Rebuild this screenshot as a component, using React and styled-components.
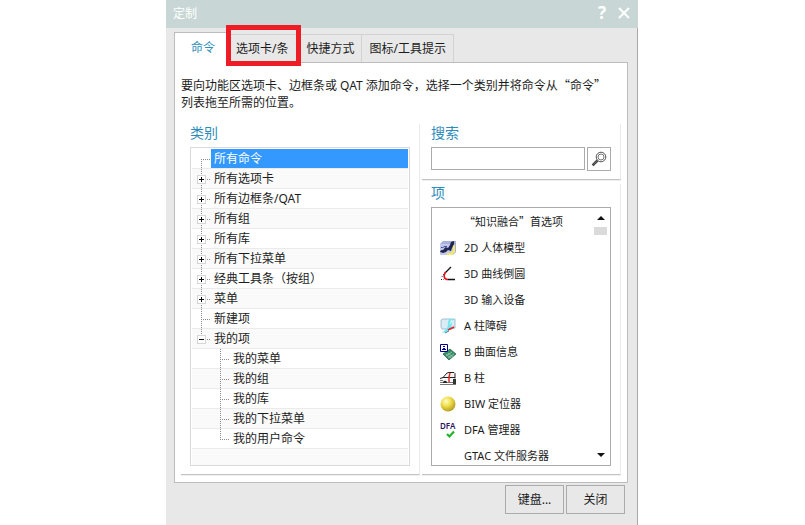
import { useState } from 'react'
import styled, { createGlobalStyle, css } from 'styled-components'

const GlobalStyle = createGlobalStyle`
  * {
    box-sizing: border-box;
  }

  body {
    margin: 0;
    padding-right: 1px;
    background: #ffffff;
    color: #1c1c1c;
    font-family: "Noto Sans", "Noto Sans CJK SC", sans-serif;
    font-size: 12px;
  }

  button, input {
    font: inherit;
    color: inherit;
  }
`

const Dialog = styled.div`
  display: flex;
  flex-direction: column;
  width: 100%;
  max-width: 472px;
  min-height: 100vh;
  margin: 0 auto;
  background: #e8e8e8;
`

// Title bar
const TitleBar = styled.header`
  display: flex;
  height: 28px;
  padding: 0 3px 0 7px;
  background: #c8d7d5;
  color: #ffffff;
`

const Title = styled.h1`
  flex: 1;
  margin: 0;
  font-size: 12px;
  font-weight: 400;
  line-height: 28px;
`

const TitleButton = styled.button`
  display: flex;
  align-items: center;
  justify-content: center;
  width: 22px;
  height: 26px;
  padding: 0;
  border: 0;
  background: none;
  color: #ffffff;
  font-size: 17px;
  font-weight: 700;
  line-height: 26px;
`

const Body = styled.div`
  flex: 1;
  padding: 4px 9px 11px 8px;
  border-right: 1px solid #a8a8a8;
`

// Tabs
const TabList = styled.div`
  display: flex;
  align-items: flex-end;
`

const Tab = styled.button`
  position: relative;
  height: 28px;
  padding: 0 6px;
  border: 1px solid #d2d2d2;
  border-width: 1px 1px 0 0;
  background: #e8e8e8;
  line-height: 27px;
  white-space: nowrap;

  ${({ $wide }) => $wide && css`
    padding: 0 7px 0 8px;
  `}

  ${({ $marked }) => $marked && css`
    padding: 0 11px 0 7px;
  `}

  ${({ $active }) => $active && css`
    height: 31px;
    margin-bottom: -1px;
    padding: 0 14px 0 16px;
    border-color: #bdbdbd;
    border-width: 1px 0 0 1px;
    background: #ffffff;
    color: #2d8cbb;
    line-height: 30px;
  `}
`

const Highlight = styled.span`
  position: absolute;
  z-index: 1;
  inset: -10px -2px -4px -3px;
  border: 5px solid #ee1c25;
  pointer-events: none;
`

const Panel = styled.section`
  padding: 14px 6px 7px;
  border: 1px solid #bdbdbd;
  background: #ffffff;
`

const Hint = styled.p`
  margin: 0 0 13px;
  line-height: 17px;
`

// Full-width quotation marks
const Quote = styled.span`
  font-family: "Noto Sans CJK SC", sans-serif;
  line-height: 0;
`

const Columns = styled.div`
  display: grid;
  grid-template-columns: 239fr 199fr;
  gap: 2px;
`

const Column = styled.div`
  display: flex;
  flex-direction: column;
  gap: 4px;
  min-width: 0;
`

const Group = styled.section`
  padding: 0 9px 8px;
  border-right: 1px solid #ebebeb;
  border-bottom: 1px solid #c4c4c4;
  box-shadow: 0 1px 0 #efefef;
`

const GroupTitle = styled.h2`
  height: 23px;
  margin: 0;
  color: #2d8cbb;
  font-size: 14px;
  font-weight: 400;
  line-height: 18px;

  label {
    display: block;
  }
`

// Category tree
const Tree = styled.ul`
  display: flex;
  flex-direction: column;
  margin: 0;
  padding: 1px 1px 0;
  border: 1px solid #dadada;
  list-style: none;
`

const TreeRow = styled.li`
  display: flex;
  height: 20px;
  padding-left: ${({ $level }) => ($level ? 19 : 0)}px;
  box-shadow: inset 0 -1px 0 #ebebeb;

  &:nth-child(even) {
    background: #fafafa;
  }
`

const TreeEnd = styled.li`
  height: 16px;
  background: #fafafa;
`

const Guide = styled.svg`
  flex: none;
  width: 19px;
  height: 20px;
`

const Toggle = styled.button`
  flex: none;
  width: 19px;
  height: 20px;
  padding: 0;
  border: 0;
  background: none;

  svg {
    display: block;
  }
`

const TreeLabel = styled.span`
  flex: 1;
  height: 19px;
  padding-left: 3px;
  line-height: 19px;
  white-space: nowrap;

  ${({ $selected }) => $selected && css`
    background: #3399ff;
    color: #ffffff;
  `}
`

// Search
const SearchRow = styled.form`
  display: flex;
  align-items: flex-start;
  gap: 2px;
`

const SearchInput = styled.input`
  flex: 1;
  min-width: 0;
  height: 23px;
  padding: 0 4px;
  border: 1px solid #ababab;
  outline: none;
`

const SearchButton = styled.button`
  display: flex;
  align-items: center;
  justify-content: center;
  width: 24px;
  height: 24px;
  padding: 0;
  border: 1px solid #ababab;
  background: #ffffff;
`

// Command list
const ListBox = styled.div`
  display: flex;
  height: 259px;
  border: 1px solid #ababab;
  overflow: hidden;
`

const CommandList = styled.ul`
  flex: 1;
  margin: 0;
  padding: 1px 0 0;
  list-style: none;
  font-size: 11px;
`

const Command = styled.li`
  display: flex;
  align-items: center;
  gap: 8px;
  height: 26px;
  padding-left: 8px;
  line-height: 26px;
  white-space: nowrap;
`

const CommandIcon = styled.svg`
  flex: none;
  width: 16px;
  height: 16px;
  overflow: visible;
`

const ScrollBar = styled.div`
  display: flex;
  flex-direction: column;
  align-items: center;
  width: 19px;
  padding-bottom: 4px;
`

const ScrollArrow = styled.button`
  display: flex;
  align-items: center;
  justify-content: center;
  width: 13px;
  height: 13px;
  padding: 0;
  border: 0;
  background: none;

  &:first-child {
    height: 19px;
  }
`

const ScrollThumb = styled.div`
  width: 13px;
  height: 8px;
  margin-bottom: auto;
  background: #dadada;
`

// Footer
const Footer = styled.footer`
  display: flex;
  justify-content: flex-end;
  gap: 2px;
  padding: 2px 3px 0 0;
`

const FooterButton = styled.button`
  width: 59px;
  height: 29px;
  padding: 0;
  border: 1px solid #ababab;
  background: #e8e8e8;
  line-height: 27px;
`

const categories = [
  { label: '所有命令', first: true },
  { label: '所有选项卡', toggle: '+' },
  { label: '所有边框条/QAT', toggle: '+' },
  { label: '所有组', toggle: '+' },
  { label: '所有库', toggle: '+' },
  { label: '所有下拉菜单', toggle: '+' },
  { label: '经典工具条（按组）', toggle: '+' },
  { label: '菜单', toggle: '+' },
  { label: '新建项' },
  { label: '我的项', toggle: '-', last: true },
  { label: '我的菜单', level: 1 },
  { label: '我的组', level: 1 },
  { label: '我的库', level: 1 },
  { label: '我的下拉菜单', level: 1 },
  { label: '我的用户命令', level: 1, last: true },
]

const icons = {
  body: (
    <>
      <path d="M0 4 3 1H16V12L13 15H0Z" fill="#a9b0dc" />
      <path d="M0 4H13V15H0Z" fill="#c3c8ec" />
      <path d="M13 5h2v7l-3 3H7v-2h4l2-3z" fill="#f6ec62" />
      <path d="M0 12c1-3 3-1 4-3s2-2 4-1l2-3 1-3 3-1v3l-2 4-1 3-3-1-2 2-3 1z" fill="#20264f" />
      <path d="M1 7.5c2 1 3-2 6-1" stroke="#3d4c94" fill="none" />
    </>
  ),
  curve: (
    <>
      <path d="M11 1 5 7M8 13.5h7" stroke="#111" strokeWidth="1.3" fill="none" />
      <path d="M5.5 6C3 10 4 13.5 8 13.5" stroke="#e3151b" strokeWidth="1.6" fill="none" />
      <path d="M4 8 1 12M1 13.5h3" stroke="#222" strokeDasharray="1 1.5" fill="none" />
    </>
  ),
  pillar: (
    <>
      <path d="M1 2 3 1h12v9l-4 1H2L1 9Z" fill="#dcecf5" stroke="#8fb5c9" strokeWidth=".8" />
      <path d="M9 1h5c-2 2-3 3-2 5l-1 4-4 4-5 1 4-4c3-2 1-6 3-10z" fill="#7ce4ec" />
      <path d="M11 2c2 0 2 2 0 3L9 8z" fill="#c5f9fb" />
      <path d="M14 9 8 12" stroke="#d52a35" strokeWidth="1.8" />
      <path d="M9 13 5 15" stroke="#5c78a2" />
    </>
  ),
  surface: (
    <>
      <path d="m3 10 7-5 6 5-7 6z" fill="#3a8c66" stroke="#176342" strokeWidth=".7" />
      <path d="m6 12 6-4m-4 6 6-4m-6-1 5 4M6 10l5 4" stroke="#a5d9bb" strokeWidth=".7" />
      <path d="M.5.5h7v7h-7z" fill="#fff" stroke="#00008b" />
      <path d="M3 2h2v1H3zM3 4h2v1h1v1H2V5h1z" fill="#00008b" />
    </>
  ),
  car: (
    <>
      <path d="M0 8 5 7l4-4 6 1v9H0z" fill="#f4f4f4" />
      <path d="M3 7.5 7 3l2-.5h5l1 1v5M0 8.5l3-1h12" stroke="#222" fill="none" />
      <path d="M0 10.5h3M0 12.5h13M0 14.5h16" stroke="#777" fill="none" />
      <path d="M3 13c0-3 4-3 4 0z" fill="#222" />
      <path d="M13 9h3v5h-3z" fill="#333" />
      <path d="M10 3 9 7v5" stroke="#e2231a" strokeWidth="1.4" fill="none" />
    </>
  ),
  ball: (
    <>
      <defs>
        <radialGradient id="ball" cx=".38" cy=".32" r=".7">
          <stop offset="0" stopColor="#fffcc8" />
          <stop offset=".45" stopColor="#efe04d" />
          <stop offset="1" stopColor="#b59d1c" />
        </radialGradient>
      </defs>
      <circle cx="8" cy="8" r="7.5" fill="url(#ball)" />
    </>
  ),
  dfa: (
    <>
      <text x="0" y="7" fontSize="8" fontWeight="600" fontFamily="Noto Sans" fill="#27145e">DFA</text>
      <path d="m7 12 2.5 2.5L14 9.5" stroke="#21b32d" strokeWidth="2.2" fill="none" />
    </>
  ),
}

const commands = [
  { label: <><Quote>“</Quote>知识融合<Quote>”</Quote>首选项</> },
  { label: '2D 人体模型', icon: 'body' },
  { label: '3D 曲线倒圆', icon: 'curve' },
  { label: '3D 输入设备' },
  { label: 'A 柱障碍', icon: 'pillar' },
  { label: 'B 曲面信息', icon: 'surface' },
  { label: 'B 柱', icon: 'car' },
  { label: 'BIW 定位器', icon: 'ball' },
  { label: 'DFA 管理器', icon: 'dfa' },
  { label: 'GTAC 文件服务器' },
]

function GuideLines({ first, last, toggle }) {
  return (
    <Guide viewBox="0 0 19 20" aria-hidden="true">
      <path
        d={`M9.5 ${first ? 10 : 0}V${last ? 11 : 20}M9 10.5H19`}
        stroke="#8c8c8c"
        strokeDasharray="1 1"
        fill="none"
      />
      {toggle && (
        <>
          <rect x="5.5" y="6.5" width="8" height="8" fill="#fff" stroke="#d6d6d6" />
          <path d={toggle === '+' ? 'M7 10.5h5M9.5 8v5' : 'M7 10.5h5'} stroke="#111" />
        </>
      )}
    </Guide>
  )
}

export default function App() {
  const [selected, setSelected] = useState(0)

  return (
    <>
      <GlobalStyle />
      <Dialog role="dialog" aria-labelledby="dialog-title">
        <TitleBar>
          <Title id="dialog-title">定制</Title>
          <TitleButton aria-label="帮助">?</TitleButton>
          <TitleButton aria-label="关闭窗口">
            <svg width="12" height="12" viewBox="0 0 12 12">
              <path d="m1 1 10 10M11 1 1 11" stroke="currentColor" strokeWidth="2" />
            </svg>
          </TitleButton>
        </TitleBar>

        <Body>
          <TabList role="tablist">
            <Tab role="tab" aria-selected="true" $active>命令</Tab>
            <Tab role="tab" $marked>
              选项卡/条
              <Highlight />
            </Tab>
            <Tab role="tab">快捷方式</Tab>
            <Tab role="tab" $wide>图标/工具提示</Tab>
          </TabList>

          <Panel role="tabpanel">
            <Hint>
              要向功能区选项卡、边框条或 QAT 添加命令，选择一个类别并将命令从<Quote>“</Quote>命令<Quote>”</Quote>
              <br />
              列表拖至所需的位置。
            </Hint>

            <Columns>
              <Group>
                <GroupTitle>类别</GroupTitle>
                <Tree>
                  {categories.map(({ label, level, toggle, first, last }, index) => (
                    <TreeRow key={label} $level={level} onClick={() => setSelected(index)}>
                      {toggle ? (
                        <Toggle aria-label={label}>
                          <GuideLines toggle={toggle} last={last} />
                        </Toggle>
                      ) : (
                        <GuideLines first={first} last={last} />
                      )}
                      <TreeLabel $selected={index === selected}>{label}</TreeLabel>
                    </TreeRow>
                  ))}
                  <TreeEnd />
                </Tree>
              </Group>

              <Column>
                <Group>
                  <GroupTitle>
                    <label htmlFor="search">搜索</label>
                  </GroupTitle>
                  <SearchRow onSubmit={(event) => event.preventDefault()}>
                    <SearchInput id="search" type="text" />
                    <SearchButton aria-label="搜索">
                      <svg width="16" height="16" viewBox="0 0 16 16" fill="none">
                        <path d="M6 9 1.5 13.5l1 1L7 10" stroke="#444" strokeWidth="1.2" />
                        <circle cx="10" cy="6" r="4.8" stroke="#555" />
                        <circle cx="10" cy="6" r="3" stroke="#777" />
                      </svg>
                    </SearchButton>
                  </SearchRow>
                </Group>

                <Group>
                  <GroupTitle>项</GroupTitle>
                  <ListBox>
                    <CommandList>
                      {commands.map(({ label, icon }, index) => (
                        <Command key={index}>
                          <CommandIcon viewBox="0 0 16 16" aria-hidden="true">
                            {icon && icons[icon]}
                          </CommandIcon>
                          <span>{label}</span>
                        </Command>
                      ))}
                    </CommandList>
                    <ScrollBar>
                      <ScrollArrow aria-label="向上滚动">
                        <svg width="8" height="4" viewBox="0 0 8 4"><path d="M0 4 4 0l4 4z" fill="#111" /></svg>
                      </ScrollArrow>
                      <ScrollThumb />
                      <ScrollArrow aria-label="向下滚动">
                        <svg width="8" height="4" viewBox="0 0 8 4"><path d="M0 0h8L4 4z" fill="#111" /></svg>
                      </ScrollArrow>
                    </ScrollBar>
                  </ListBox>
                </Group>
              </Column>
            </Columns>
          </Panel>

          <Footer>
            <FooterButton>键盘...</FooterButton>
            <FooterButton>关闭</FooterButton>
          </Footer>
        </Body>
      </Dialog>
    </>
  )
}
